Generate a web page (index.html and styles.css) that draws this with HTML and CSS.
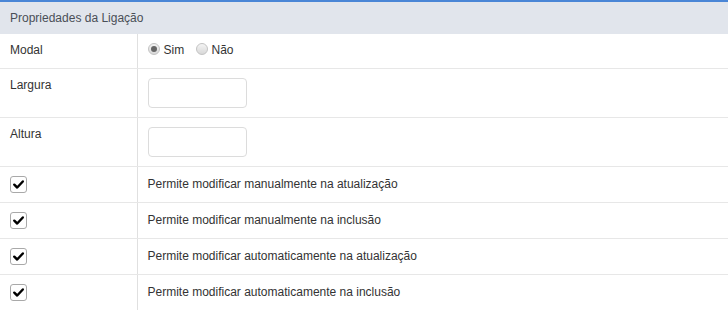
FILE: index.html
```html
<!DOCTYPE html>
<html lang="pt">
<head>
    <meta charset="UTF-8">
    <title>Propriedades da Ligação</title>
    <link rel="stylesheet" href="styles.css">
</head>
<body>
    <div class="panel">
        <div class="panel-title">Propriedades da Ligação</div>
        <table class="props">
            <tr>
                <td class="label">Modal</td>
                <td>
                    <span class="radio checked"></span><span class="radio-text">Sim</span>
                    <span class="radio"></span><span class="radio-text">Não</span>
                </td>
            </tr>
            <tr class="input-row">
                <td class="label">Largura</td>
                <td><input type="text" class="field"></td>
            </tr>
            <tr class="input-row">
                <td class="label">Altura</td>
                <td><input type="text" class="field"></td>
            </tr>
            <tr class="check-row">
                <td class="label"><span class="check"><svg viewBox="0 0 16 16"><path d="M3.5 8.2 L6.6 11.2 L12.6 4.8" /></svg></span></td>
                <td>Permite modificar manualmente na atualização</td>
            </tr>
            <tr class="check-row">
                <td class="label"><span class="check"><svg viewBox="0 0 16 16"><path d="M3.5 8.2 L6.6 11.2 L12.6 4.8" /></svg></span></td>
                <td>Permite modificar manualmente na inclusão</td>
            </tr>
            <tr class="check-row">
                <td class="label"><span class="check"><svg viewBox="0 0 16 16"><path d="M3.5 8.2 L6.6 11.2 L12.6 4.8" /></svg></span></td>
                <td>Permite modificar automaticamente na atualização</td>
            </tr>
            <tr class="check-row">
                <td class="label"><span class="check"><svg viewBox="0 0 16 16"><path d="M3.5 8.2 L6.6 11.2 L12.6 4.8" /></svg></span></td>
                <td>Permite modificar automaticamente na inclusão</td>
            </tr>
        </table>
    </div>
</body>
</html>
```

FILE: styles.css
```css
* {
    margin: 0;
    padding: 0;
    box-sizing: border-box;
}

body {
    font-family: "Liberation Sans", Arial, sans-serif;
    font-size: 12px;
    color: #333;
    background: #fff;
}

.panel {
    width: 728px;
    border-top: 2px solid #4a86d6;
}

.panel-title {
    background: #e1e5ec;
    color: #4a4f57;
    height: 32px;
    line-height: 32px;
    padding-left: 10px;
}

.props {
    width: 100%;
    border-collapse: collapse;
}

.props td {
    padding: 9px 10px 10px;
    vertical-align: top;
    line-height: 15px;
    border-bottom: 1px solid #e7e7e7;
}

.props td.label {
    width: 137px;
    border-right: 1px solid #e0e0e0;
}

.props tr:last-child td {
    border-bottom: none;
}

.input-row td {
    padding: 9px 10px 9px;
}

.check-row td {
    padding: 9px 10px 9px;
    vertical-align: middle;
    height: 35px;
}

.radio {
    display: inline-block;
    width: 12px;
    height: 12px;
    border-radius: 50%;
    border: 1px solid #c4c4c4;
    background: linear-gradient(#f4f4f4, #d8d8d8);
    vertical-align: -1px;
    margin-right: 4px;
    position: relative;
}

.radio.checked::after {
    content: "";
    position: absolute;
    left: 2px;
    top: 2px;
    width: 6px;
    height: 6px;
    border-radius: 50%;
    background: #666;
}

.radio-text {
    margin-right: 8px;
}

.field {
    display: block;
    width: 99px;
    height: 30px;
    border: 1px solid #dcdcdc;
    border-radius: 4px;
    background: #fff;
}

.check {
    display: block;
    width: 17px;
    height: 17px;
    border: 1px solid #a9a9a9;
    border-radius: 3px;
    background: #fff;
}

.check svg {
    display: block;
    width: 15px;
    height: 15px;
}

.check path {
    fill: none;
    stroke: #000;
    stroke-width: 2.6;
    stroke-linecap: round;
    stroke-linejoin: round;
}
```
